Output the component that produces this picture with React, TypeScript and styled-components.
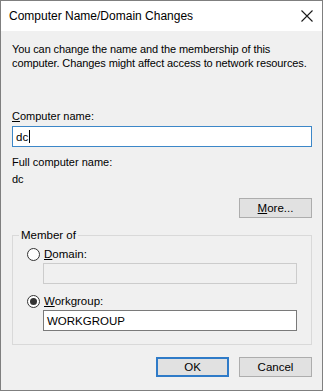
import styled, { createGlobalStyle } from "styled-components";

const GlobalStyle = createGlobalStyle`
  html, body {
    margin: 0;
    padding: 0;
    background: #ffffff;
  }
  body {
    font-family: "Liberation Sans", Arial, sans-serif;
    font-size: 11px;
    color: #000;
  }
`;

export default function App() {
  return (
    <>
      <GlobalStyle />
      <Window>
        {/* title bar */}
        <TitleBar>
          <Title>Computer Name/Domain Changes</Title>
          <CloseIcon width="12" height="12" viewBox="0 0 12 12">
            <path d="M0.5 0.5 L11.5 11.5 M11.5 0.5 L0.5 11.5" stroke="#1a1a1a" strokeWidth="1.1" />
          </CloseIcon>
        </TitleBar>
        <Body>
          <Intro>
            You can change the name and the membership of this
            <br />
            computer. Changes might affect access to network resources.
          </Intro>
          <FieldLabel>
            <u>C</u>omputer name:
          </FieldLabel>
          <TextBox $variant="focused">
            dc<Caret />
          </TextBox>
          <InfoLabel>Full computer name:</InfoLabel>
          <InfoValue>dc</InfoValue>
          <RightRow>
            <Button>
              <u>M</u>ore...
            </Button>
          </RightRow>
          <GroupBox>
            <Legend>Member of</Legend>
            <RadioRow $top={5}>
              <Radio />
              <span>
                <u>D</u>omain:
              </span>
            </RadioRow>
            <IndentBox>
              <TextBox $variant="disabled" />
            </IndentBox>
            <RadioRow $top={10}>
              <Radio $checked />
              <span>
                <u>W</u>orkgroup:
              </span>
            </RadioRow>
            <IndentBox>
              <TextBox $variant="normal">WORKGROUP</TextBox>
            </IndentBox>
          </GroupBox>
          <ButtonRow>
            <Button $default>OK</Button>
            <Button>Cancel</Button>
          </ButtonRow>
        </Body>
      </Window>
    </>
  );
}

interface TextBoxProps {
  $variant: "focused" | "normal" | "disabled";
}

const Window = styled.div`
  width: 323px;
  height: 391px;
  box-sizing: border-box;
  border: 1px solid #7f7f7f;
  display: flex;
  flex-direction: column;
  background: #f0f0f0;
`;

const TitleBar = styled.div`
  height: 30px;
  background: #ffffff;
  display: flex;
  align-items: center;
  justify-content: space-between;
  padding: 0 9px 0 8px;
`;

const Title = styled.div`
  font-family: "Liberation Sans", Arial, sans-serif;
  font-size: 12px;
  color: #000;
`;

const CloseIcon = styled.svg`
  display: block;
  margin-top: -1px;
`;

const Body = styled.div`
  flex: 1;
  display: flex;
  flex-direction: column;
  padding: 0 10px 0 11px;
`;

const Intro = styled.p`
  margin: 11px 0 0;
  line-height: 14px;
  white-space: nowrap;
  letter-spacing: -0.1px;
`;

const FieldLabel = styled.div`
  margin-top: 39px;
  line-height: 14px;
`;

const TextBox = styled.div<TextBoxProps>`
  height: 21px;
  box-sizing: border-box;
  margin-top: 3px;
  display: flex;
  align-items: center;
  padding-left: 3px;
  background: ${(p) => (p.$variant === "disabled" ? "#f0f0f0" : "#ffffff")};
  border: 1px solid
    ${(p) =>
      p.$variant === "focused"
        ? "#3c87c8"
        : p.$variant === "disabled"
        ? "#cccccc"
        : "#7a7a7a"};
  font-size: 11.5px;
`;

const Caret = styled.span`
  display: inline-block;
  width: 1px;
  height: 13px;
  background: #000;
  margin-left: 1px;
`;

const InfoLabel = styled.div`
  margin-top: 8px;
  line-height: 14px;
`;

const InfoValue = styled.div`
  margin-top: 3px;
  line-height: 14px;
`;

const RightRow = styled.div`
  display: flex;
  justify-content: flex-end;
  margin-top: 12px;
`;

const Button = styled.div<{ $default?: boolean }>`
  width: 73px;
  height: 20px;
  box-sizing: border-box;
  display: flex;
  align-items: center;
  justify-content: center;
  background: #e1e1e1;
  border: ${(p) => (p.$default ? "2px solid #2f7bc8" : "1px solid #adadad")};
  font-size: 11.5px;
`;

const GroupBox = styled.fieldset`
  margin: 10px 0 0;
  padding: 0 14px 13px 14px;
  border: 1px solid #d9d9d9;
  min-width: 0;
`;

const Legend = styled.legend`
  margin-left: -8px;
  padding: 0 2px;
  line-height: 14px;
  font-size: 11.5px;
`;

const RadioRow = styled.div<{ $top: number }>`
  display: flex;
  align-items: center;
  gap: 4px;
  margin-top: ${(p) => p.$top}px;
  height: 14px;
  font-size: 11.5px;
`;

const Radio = styled.span<{ $checked?: boolean }>`
  width: 13px;
  height: 13px;
  box-sizing: border-box;
  border-radius: 50%;
  border: 1px solid #333333;
  background: #ffffff;
  display: flex;
  align-items: center;
  justify-content: center;
  &::after {
    content: "";
    display: ${(p) => (p.$checked ? "block" : "none")};
    width: 7px;
    height: 7px;
    border-radius: 50%;
    background: #333333;
  }
`;

const IndentBox = styled.div`
  padding-left: 16px;
  margin-top: -1px;
`;

const ButtonRow = styled.div`
  display: flex;
  justify-content: flex-end;
  gap: 10px;
  margin-top: 12px;
`;
